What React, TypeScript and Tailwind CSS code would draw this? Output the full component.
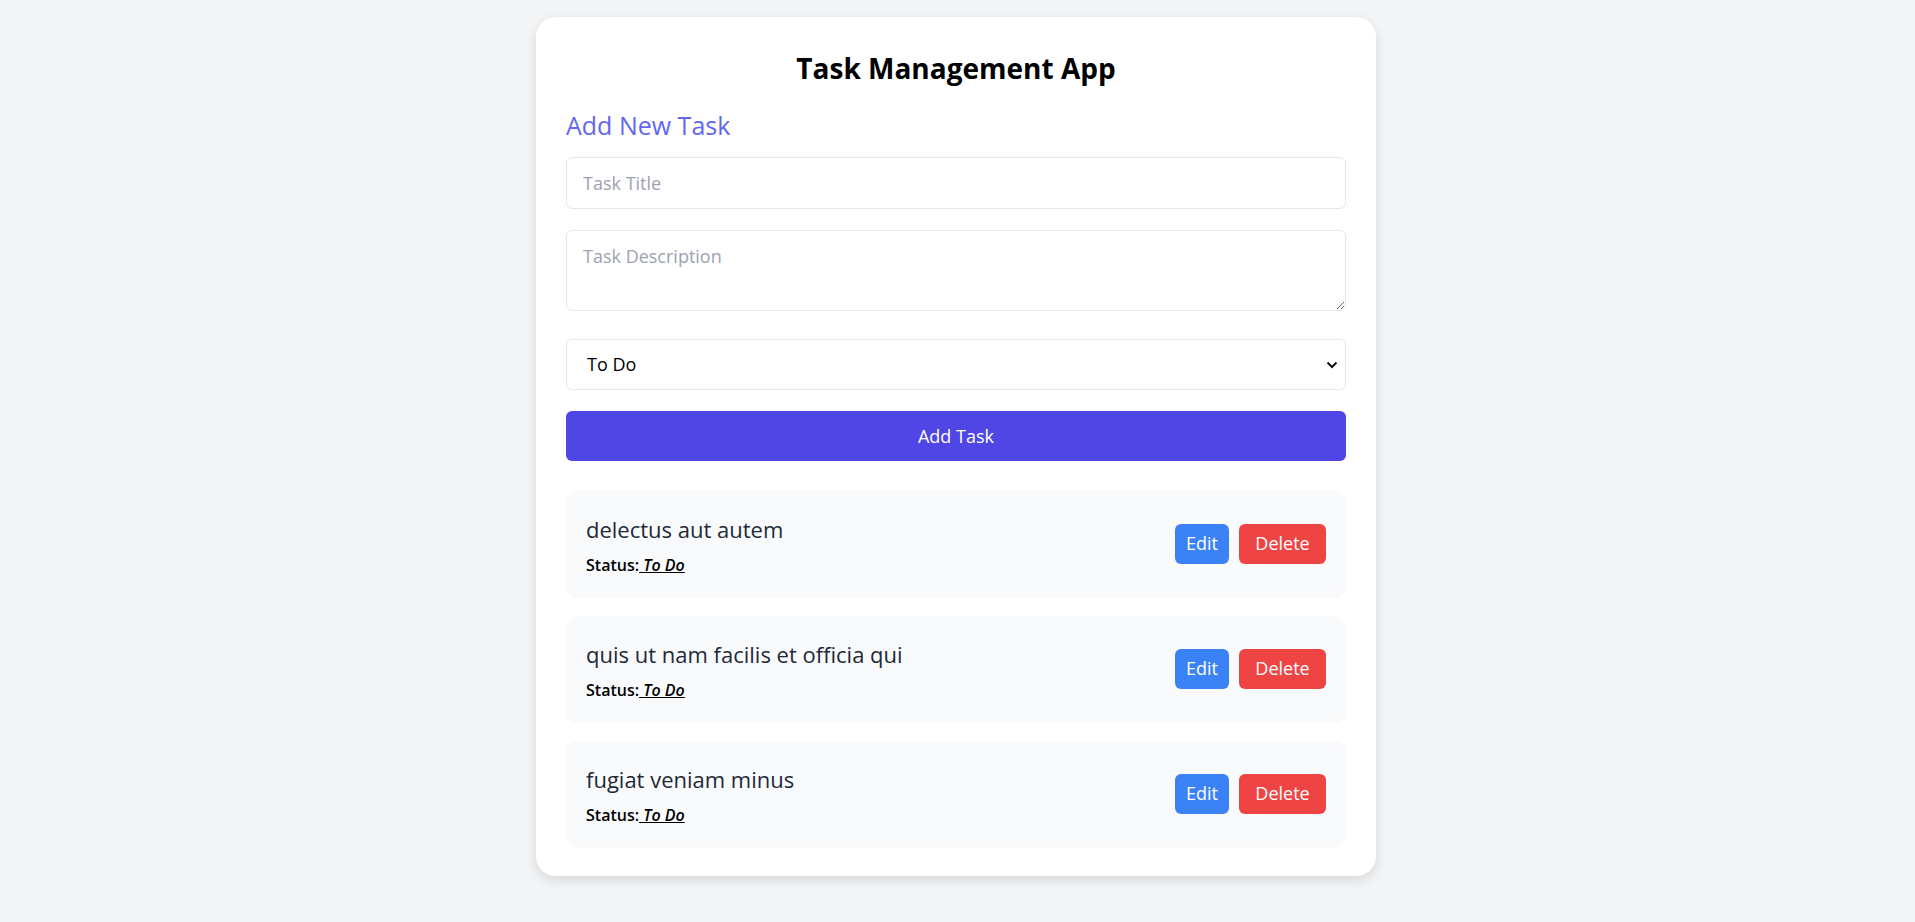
import { useState } from 'react'

type Task = { id: number; title: string; status: string }

const initialTasks: Task[] = [
  { id: 1, title: 'delectus aut autem', status: 'To Do' },
  { id: 2, title: 'quis ut nam facilis et officia qui', status: 'To Do' },
  { id: 3, title: 'fugiat veniam minus', status: 'To Do' },
]

export default function App() {
  const [tasks, setTasks] = useState<Task[]>(initialTasks)
  const [title, setTitle] = useState('')
  const [description, setDescription] = useState('')
  const [status, setStatus] = useState('To Do')

  const addTask = () => {
    if (!title.trim()) return
    setTasks([{ id: Date.now(), title, status }, ...tasks])
    setTitle('')
    setDescription('')
  }

  const deleteTask = (id: number) => {
    setTasks(tasks.filter((t) => t.id !== id))
  }

  return (
    <div className="min-h-screen bg-[#f3f4f6] pt-[17px] pr-[3px] pb-10 font-['Open_Sans',sans-serif]">
      <div className="mx-auto w-[840px] rounded-[20px] bg-white p-[30px] shadow-[0_4px_12px_rgba(0,0,0,0.12)]">
        <h1 className="text-center text-[28px] leading-[42px] font-bold text-black">Task Management App</h1>

        <h2 className="mt-[20px] text-[25px] leading-[32px] text-[#6366f1]">Add New Task</h2>

        <div className="mt-[16px] flex flex-col">
          <input
            value={title}
            onChange={(e) => setTitle(e.target.value)}
            placeholder="Task Title"
            className="h-[52px] w-full rounded-md border border-[#e5e7eb] px-4 text-[18px] text-black outline-none placeholder:text-[#9ca3af]"
          />
          <textarea
            value={description}
            onChange={(e) => setDescription(e.target.value)}
            placeholder="Task Description"
            className="mt-[21px] block h-[81px] w-full rounded-md border border-[#e5e7eb] px-4 pt-[12px] pb-2 text-[18px] text-black outline-none placeholder:text-[#9ca3af]"
          />
          <div className="relative mt-[28px]">
            <select
              value={status}
              onChange={(e) => setStatus(e.target.value)}
              className="h-[51px] w-full appearance-none rounded-md border border-[#e5e7eb] bg-white px-5 text-[18px] text-black outline-none"
            >
              <option>To Do</option>
              <option>In Progress</option>
              <option>Done</option>
            </select>
            <svg
              className="pointer-events-none absolute top-1/2 right-[8px] -translate-y-1/2"
              width="12"
              height="8"
              viewBox="0 0 12 8"
              fill="none"
            >
              <path d="M1.5 1.5 6 6l4.5-4.5" stroke="#111" strokeWidth="2" />
            </svg>
          </div>
          <button
            onClick={addTask}
            className="mt-[21px] h-[50px] w-full rounded-md bg-[#4f46e5] text-[18px] text-white"
          >
            Add Task
          </button>
        </div>

        <div className="mt-[30px] flex flex-col gap-5">
          {tasks.map((task) => (
            <div
              key={task.id}
              className="flex h-[105px] items-center justify-between rounded-xl bg-[#f8fafc] px-5 shadow-[0_1px_2px_rgba(0,0,0,0.04)]"
            >
              <div className="pt-[2px]">
                <p className="text-[22px] leading-[30px] text-[#1f2937]">{task.title}</p>
                <p className="mt-[10px] text-[16px] leading-[22px] font-semibold text-black">
                  Status:
                  <span className="italic underline"> {task.status}</span>
                </p>
              </div>
              <div className="flex gap-[10px]">
                <button className="h-10 w-[54px] rounded-md bg-[#3b82f6] text-[18px] text-white">Edit</button>
                <button
                  onClick={() => deleteTask(task.id)}
                  className="h-10 w-[87px] rounded-md bg-[#ef4444] text-[18px] text-white"
                >
                  Delete
                </button>
              </div>
            </div>
          ))}
        </div>
      </div>
    </div>
  )
}
